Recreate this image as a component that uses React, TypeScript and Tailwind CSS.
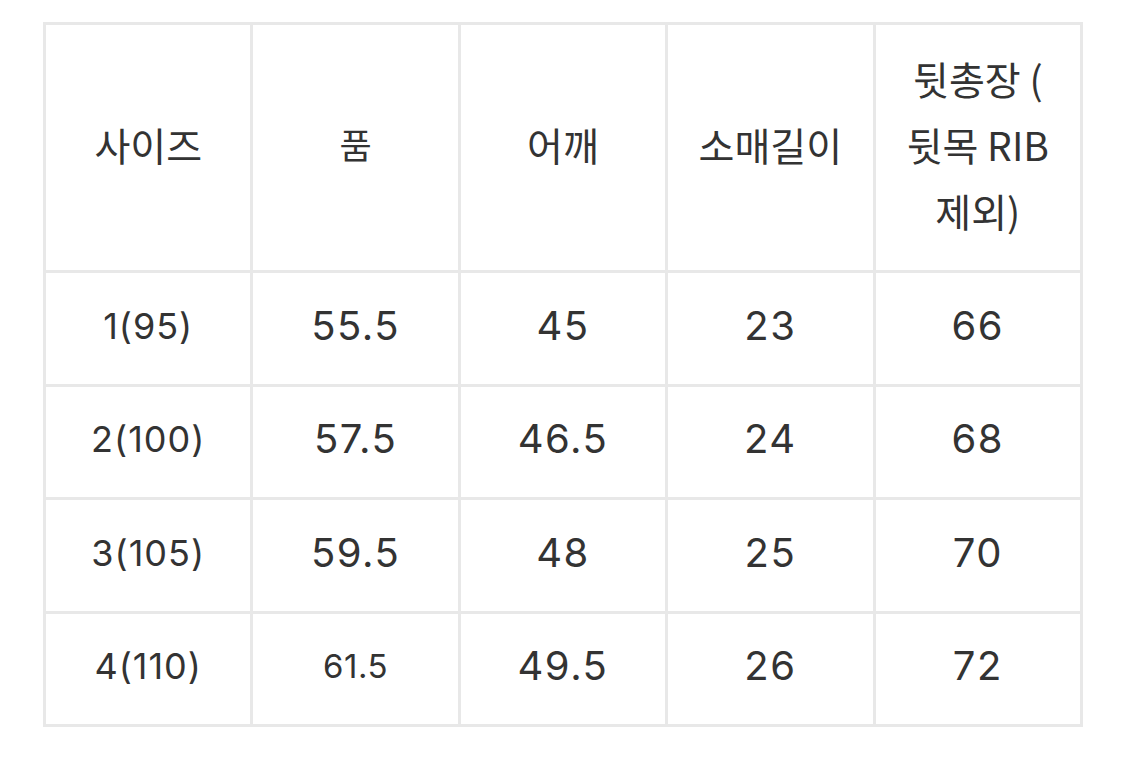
import React from "react";

const rows = [
  ["1(95)", "55.5", "45", "23", "66"],
  ["2(100)", "57.5", "46.5", "24", "68"],
  ["3(105)", "59.5", "48", "25", "70"],
  ["4(110)", "61.5", "49.5", "26", "72"],
];

export default function App() {
  return (
    <div className="w-[1125px] h-[761px] bg-white pt-[22px] pl-[43px] [font-family:Inter,'Noto_Sans_CJK_KR',sans-serif] text-[#333333]">
      <table className="border-collapse table-fixed w-[1040px]">
        <tbody>
          <tr className="h-[248px]">
            {["사이즈", "품", "어깨", "소매길이", "뒷총장 ( 뒷목 RIB 제외)"].map((h, i) => (
              <td
                key={i}
                className={`border-[3px] border-[#e8e8e8] text-center align-middle px-[12px] pb-[8px] leading-[66px] break-keep ${
                  i === 1 ? "text-[35px]" : "text-[39px]"
                } [font-family:'Noto_Sans_CJK_KR',sans-serif] font-normal`}
              >
                {h}
              </td>
            ))}
          </tr>
          {rows.map((r, ri) => (
            <tr key={ri} className="h-[113.5px]">
              {r.map((c, ci) => (
                <td
                  key={ci}
                  className={`border-[3px] border-[#e8e8e8] text-center align-middle pb-[5px] ${
                    ci === 0
                      ? "text-[36px] tracking-[1px]"
                      : c === "61.5"
                      ? "text-[33px] tracking-[0.5px]"
                      : "text-[40px] tracking-[1.5px]"
                  }`}
                >
                  {c}
                </td>
              ))}
            </tr>
          ))}
        </tbody>
      </table>
    </div>
  );
}
